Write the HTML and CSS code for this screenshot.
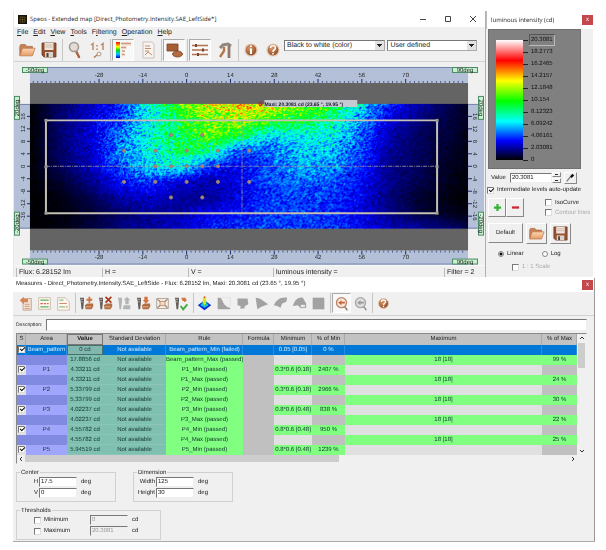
FILE: index.html
```
<!DOCTYPE html>
<html lang="en">
<head>
<meta charset="utf-8">
<title>Speos - Extended map</title>
<link rel="stylesheet" href="styles.css">
</head>
<body>
<svg class="defs" aria-hidden="true">
  <defs>
    <linearGradient id="peach" x1="0" y1="0" x2="0" y2="1"><stop offset="0" stop-color="#fbd6b4"/><stop offset="1" stop-color="#e79a62"/></linearGradient>
    <radialGradient id="ball" cx=".4" cy=".35" r=".7"><stop offset="0" stop-color="#d99a6c"/><stop offset="1" stop-color="#8a4420"/></radialGradient>
    <linearGradient id="rain" x1="0" y1="0" x2="0" y2="1"><stop offset="0" stop-color="#f00"/><stop offset=".3" stop-color="#ff0"/><stop offset=".5" stop-color="#0d0"/><stop offset=".75" stop-color="#0cf"/><stop offset="1" stop-color="#00c"/></linearGradient>
  </defs>
  <symbol id="folder" viewBox="0 0 20 18"><path d="M2 15V5l1-2h5l2 2h6v3" fill="#c98255" stroke="#a8643a" stroke-width=".8"/><path d="M2 15.500 5 7h14l-3 8.500z" fill="url(#peach)" stroke="#b9754a" stroke-width=".8"/></symbol>
  <symbol id="save" viewBox="0 0 18 18"><path d="M2 2h14v14H4l-2-2z" fill="#955130" stroke="#6b3a22" stroke-width=".8"/><path d="M4.500 2h9v7h-9z" fill="#f1e4da"/><path d="M5.500 4h7M5.500 6h7" stroke="#c5aea0" stroke-width=".8"/><path d="M5 11h8v5H5z" fill="#d9d3cf"/><path d="M6.500 12h2v4h-2z" fill="#543"/></symbol>
  <symbol id="lens" viewBox="0 0 18 18"><path d="m10 10 3 6" stroke="#a8643a" stroke-width="2.400" stroke-linecap="round"/><circle cx="8" cy="6" r="4.500" fill="#e4dcd6" stroke="#a39a94" stroke-width="1.600"/></symbol>
  <symbol id="one" viewBox="0 0 18 18"><path d="m3 4 2-1.500V9M13 4l2-1.500V9" fill="none" stroke="#c08a68" stroke-width="1.500"/><path d="M9 4v1.500M9 7.500V9" stroke="#c08a68" stroke-width="1.600"/><circle cx="11" cy="13" r="2" fill="none" stroke="#b09a8c"/><path d="m9 14-3 2.500" stroke="#b9754a" stroke-width="1.500"/></symbol>
  <symbol id="levels" viewBox="0 0 18 18"><path d="M2 1h4v16H2z" fill="url(#rain)"/><path d="M8 1h9v4h-4v3H9v8H7" fill="#f6e7dc"/><path d="M7 2.500h10M7 6.500h5M8 10h3M8 13.500h3" stroke="#c99a7c" stroke-width="1.300"/></symbol>
  <symbol id="sheet" viewBox="0 0 18 18"><path d="M4 1h9l2 2v14H4z" fill="#f8f3ef" stroke="#c0b4ac" stroke-width=".8"/><path d="M6 5h5M6 7.500h6M6 10h4M6 14l3-3 4 3" fill="none" stroke="#c08e72"/></symbol>
  <symbol id="shapes" viewBox="0 0 18 18"><path d="M2 3h11v7H2z" fill="#a65f35" stroke="#7b4122" stroke-width=".8"/><ellipse cx="12.500" cy="13" rx="5" ry="3" fill="#b56b3f" stroke="#7b4122" stroke-width=".8"/></symbol>
  <symbol id="sliders" viewBox="0 0 18 18"><path d="M1 4.500h16M1 9h16M1 13.500h16" stroke="#ad7350" stroke-width="1.300"/><path d="M5 3v3M12 7.500v3M7 12v3" stroke="#7b4122" stroke-width="2"/></symbol>
  <symbol id="tools" viewBox="0 0 18 18"><path d="M4 7 7 4l5-1 3 2" fill="none" stroke="#8f8680" stroke-width="3"/><path d="M8 6v4l-4 6" fill="none" stroke="#b9754a" stroke-width="2.400"/><path d="M13 5v12" stroke="#8f7a6c" stroke-width="2.800"/></symbol>
  <symbol id="info" viewBox="0 0 18 18"><circle cx="9" cy="9" r="6" fill="url(#ball)" stroke="#e5c8b4" stroke-width="1.200"/><path d="M9 4.500V6M9 7.500V13" stroke="#fff" stroke-width="2"/></symbol>
  <symbol id="help" viewBox="0 0 18 18"><circle cx="9" cy="9" r="6" fill="url(#ball)" stroke="#e5c8b4" stroke-width="1.200"/><path d="M6.500 7c0-3 5-3 5 0 0 2-2.500 1.500-2.500 4M9 12v1.500" fill="none" stroke="#fff" stroke-width="1.600"/></symbol>
  <symbol id="export" viewBox="0 0 18 18"><path d="M6 3h10v14H6z" fill="#f3e0d2" stroke="#bb8b6c" stroke-width=".8"/><path d="M2 5 7 1v2.500h5v4H7V10z" fill="#d58556"/><path d="M8 10h6M8 12.500h6M8 15h6" stroke="#c49a7f"/></symbol>
  <symbol id="list" viewBox="0 0 18 18"><path d="M2 2h14v14H2z" fill="#fdf9f4" stroke="#c9b3a2"/><path d="M4 5h10M4 13h10" stroke="#5faf57" stroke-width="1.500"/><path d="M4 9h10" stroke="#d9694f" stroke-width="1.500" stroke-dasharray="3 1"/></symbol>
  <symbol id="list2" viewBox="0 0 18 18"><path d="M2 2h9l5 5v10H2z" fill="#fbf6f0" stroke="#c9b3a2"/><path d="M4 5h5M4 13h7" stroke="#8fbf78" stroke-width="1.400"/><path d="M4 9h9M12 13h2" stroke="#d98a6c" stroke-width="1.400"/></symbol>
  <symbol id="gauge" viewBox="0 0 18 18"><path d="M1 2h5v4L5 16H3L2 6z" fill="#655e5a"/><path d="M2 4h3M2 7h3" stroke="#ddd" stroke-width=".7"/></symbol>
  <symbol id="part" viewBox="0 0 18 18"><path d="m7 11 3-2h7v4l-2 3H8z" fill="#b26d43"/><path d="M8 13h7" stroke="#e8bb9a"/></symbol>
  <symbol id="madd" viewBox="0 0 18 18"><use href="#gauge"/><use href="#part"/><path d="M12.500 1v7M9 4.500h7" stroke="#cf7444" stroke-width="2.200"/></symbol>
  <symbol id="mdel" viewBox="0 0 18 18"><use href="#gauge"/><use href="#part"/><path d="m9 1 7 7M16 1 9 8" stroke="#a9391c" stroke-width="2"/></symbol>
  <symbol id="mup" viewBox="0 0 18 18"><path d="M1 2h5v4L5 16H3L2 6zM8 11h8v5H7zM12 1l4 4h-2v5h-4V5H8z" fill="#b4b4b4"/></symbol>
  <symbol id="mdown" viewBox="0 0 18 18"><use href="#gauge"/><use href="#part"/><path d="m12 9-4-4h2V1h4v4h2z" fill="#d7713e"/></symbol>
  <symbol id="fit" viewBox="0 0 18 18"><path d="M2 3h14v12H2z" fill="#f4eee9" stroke="#a8978b"/><path d="m3 4 12 10M15 4 3 14" stroke="#8f7564" stroke-width="1.400"/><path d="M6 6.500h6v5H6z" fill="#f2d8c6" stroke="#b98b6b"/></symbol>
  <symbol id="mcheck" viewBox="0 0 18 18"><use href="#gauge"/><path d="M9 3h4v4M15 5h-5" fill="none" stroke="#d7713e" stroke-width="2"/><path d="m8 12 3 4 5-6" fill="none" stroke="#48ac45" stroke-width="2.400"/></symbol>
  <symbol id="surface" viewBox="0 0 18 18"><path d="m9 5 8 6-8 6-8-6z" fill="#0828dc"/><path d="m4 11 4-5V1h2v5l4 5-5 3z" fill="#13c8c8"/><path d="M7 8V2l2-2 2 2v6l-2 3z" fill="#dce61c"/><path d="M8 2.500 9 0l1 2.500z" fill="#e33"/></symbol>
  <symbol id="g1" viewBox="0 0 18 18"><path d="M2 2h3c2 0 3 6 6 9 2 2 4 3 6 3v2H2z" fill="#a2a2a2"/><path d="M7 2h10v10" fill="none" stroke="#ddd"/></symbol>
  <symbol id="g2" viewBox="0 0 18 18"><path d="M3 3h12l1 7-4 2-1 3H6l1-3-4-1z" fill="#a2a2a2"/></symbol>
  <symbol id="g3" viewBox="0 0 18 18"><path d="m2 2 5 1 10 7-8 3-5 3z" fill="#a2a2a2"/></symbol>
  <symbol id="g4" viewBox="0 0 18 18"><path d="M1 11C4 5 8 1 17 2l-1 5-5 2-2 5-4-2z" fill="#a2a2a2"/></symbol>
  <symbol id="g5" viewBox="0 0 18 18"><path d="M1 12C3 6 6 1 13 2l4 7v5h-7l-3-3z" fill="#a2a2a2"/><path d="M10 10h6v4h-6z" fill="#e8e8e8" stroke="#999" stroke-width=".8"/></symbol>
  <symbol id="g6" viewBox="0 0 18 18"><path d="M2 2h14v14H2z" fill="#a2a2a2"/></symbol>
  <symbol id="undo" viewBox="0 0 18 18"><circle cx="9" cy="8" r="6" fill="#f7e6da" stroke="#bd8261" stroke-width="1.600"/><path d="m5 8 4-3v2h4v2H9v2z" fill="#c4683a"/><path d="m13 13 3 4" stroke="#8f8680" stroke-width="2"/></symbol>
  <symbol id="redo" viewBox="0 0 18 18"><circle cx="9" cy="8" r="6" fill="#dedede" stroke="#a6a6a6" stroke-width="1.600"/><path d="m5 8 4-3v2h4v2H9v2z" fill="#999"/><path d="m13 13 3 4" stroke="#999" stroke-width="2"/></symbol>
</svg>

<div class="desk">
  <section class="win main">
    <header class="title">
      <svg class="logo" viewBox="0 0 9 9"><path d="M0 0h9v9H0z" fill="#17140c"/><path d="M2 2h5v5H2zM2 4.500h5M4.500 2v5" fill="none" stroke="#6d5a1c" stroke-width=".7"/></svg>
      <h1>Speos - Extended map [Direct_Photometry.Intensity.SAE_LeftSide*]</h1>
      <div class="caption">
        <button aria-label="Minimize"><svg viewBox="0 0 8 8"><path d="M1 4.500h6"/></svg></button>
        <button aria-label="Maximize"><svg viewBox="0 0 8 8"><path d="M1.500 1.500h5v5h-5z"/></svg></button>
        <button aria-label="Close"><svg viewBox="0 0 8 8"><path d="m1 1 6 6M7 1 1 7"/></svg></button>
      </div>
    </header>
    <nav class="menu">
      <a href="#"><u>F</u>ile</a><a href="#"><u>E</u>dit</a><a href="#"><u>V</u>iew</a><a href="#"><u>T</u>ools</a><a href="#">F<u>i</u>ltering</a><a href="#"><u>O</u>peration</a><a href="#"><u>H</u>elp</a>
    </nav>
    <div class="bar">
      <div class="set"><button aria-label="Open"><svg><use href="#folder"/></svg></button><button aria-label="Save"><svg><use href="#save"/></svg></button></div>
      <div class="set"><button aria-label="Zoom"><svg><use href="#lens"/></svg></button><button aria-label="Actual size"><svg><use href="#one"/></svg></button></div>
      <div class="set spaced"><button class="on" aria-label="Levels"><svg><use href="#levels"/></svg></button><button aria-label="Report"><svg><use href="#sheet"/></svg></button></div>
      <div class="set"><button class="on" aria-label="Measures"><svg><use href="#shapes"/></svg></button></div>
      <div class="set spaced"><button class="on" aria-label="Rulers"><svg><use href="#sliders"/></svg></button><button aria-label="Preferences"><svg><use href="#tools"/></svg></button></div>
      <div class="set end"><button aria-label="Information"><svg><use href="#info"/></svg></button><button aria-label="Help"><svg><use href="#help"/></svg></button></div>
      <select class="wide" aria-label="Palette"><option>Black to white (color)</option></select>
      <select aria-label="Scale"><option>User defined</option></select>
    </div>
    <svg class="plot" viewBox="14 64 472 201" role="img" aria-label="Intensity map">
      <path class="ruler" d="M30 67h439v16H30zM30 251h439v14H30zM14 104h16v125H14zM469 104h16v125h-16z"/>
      <path class="edge" d="M30 67.500h439M30 264.500h439M14 104.500h16M14 228.500h16M469 104.500h16M469 228.500h16"/>
      <path d="M30 83h439v168H30z" fill="#646464"/>
      <foreignObject x="30" y="104" width="439" height="125"><canvas id="map" width="439" height="125"></canvas></foreignObject>
      <g id="ticks"></g>
      <path d="M46 166.500h392M242.500 120v93" class="dash"/>
      <path d="M46 120.500h392v93H46z" class="frame"/>
      <g id="spots"></g>
      <path d="M265 100h93v7h-93z" fill="#c6c8d2"/>
      <circle cx="261" cy="104" r="1.600" fill="none" stroke="#c01010"/>
      <text class="peak" x="265" y="106">Maxi: 20.3081 cd (23.65 °, 19.95 °)</text>
      <g id="badges"></g>
    </svg>
    <footer class="status"><span>Flux: 6.28152 lm</span><span>H =</span><span>V =</span><span>luminous intensity =</span><span>Filter = 2</span></footer>
  </section>

  <section class="win palette">
    <header class="title"><h2>luminous intensity (cd)</h2><button class="close" aria-label="Close palette">x</button></header>
    <div class="legend">
      <div class="ramp"></div>
      <ol><li class="sel">20.3081</li><li>18.2773</li><li>16.2465</li><li>14.2157</li><li>12.1848</li><li>10.154</li><li>8.12323</li><li>6.09242</li><li>4.06161</li><li>2.03081</li><li>0</li></ol>
    </div>
    <div class="value">
      <label for="val">Value</label><input id="val" type="text" value="20.3081">
      <div class="spin"><button aria-label="Increase"></button><button aria-label="Decrease"></button></div>
      <button class="raised pick" aria-label="Pick colour"><svg viewBox="0 0 12 12"><path d="m2 10 5-6" stroke="#777" stroke-width="1.500"/><path d="m6 4 3-3 2 2-3 3z" fill="#111"/></svg></button>
    </div>
    <label class="opt"><input type="checkbox" checked>Intermediate levels auto-update</label>
    <div class="pair">
      <button class="raised" aria-label="Add level"><svg viewBox="0 0 10 10"><path d="M5 1v8M1 5h8" stroke="#36b336" stroke-width="2.500"/></svg></button>
      <button class="raised" aria-label="Remove level"><svg viewBox="0 0 10 10"><path d="M1 5h8" stroke="#cc2635" stroke-width="2.500"/></svg></button>
      <div class="stack"><label class="opt"><input type="checkbox">IsoCurve</label><label class="opt off"><input type="checkbox" disabled>Contour lines</label></div>
    </div>
    <div class="files">
      <button class="raised">Default</button>
      <button class="raised" aria-label="Load palette"><svg><use href="#folder"/></svg></button>
      <button class="raised" aria-label="Save palette"><svg><use href="#save"/></svg></button>
    </div>
    <div class="radios"><label class="opt"><input type="radio" name="sc" checked>Linear</label><label class="opt"><input type="radio" name="sc">Log</label></div>
    <label class="opt off scale"><input type="checkbox" disabled>1 : 1 Scale</label>
  </section>

  <section class="win measures">
    <header class="title"><h2>Measures - Direct_Photometry.Intensity.SAE_LeftSide - Flux: 6.28152 lm, Maxi: 20.3081 cd (23.65 °, 19.95 °)</h2><button class="close" aria-label="Close measures">x</button></header>
    <div class="bar small">
      <div class="set"><button aria-label="Export"><svg><use href="#export"/></svg></button><button aria-label="List"><svg><use href="#list"/></svg></button><button aria-label="Template"><svg><use href="#list2"/></svg></button></div>
      <div class="set"><button aria-label="Add"><svg><use href="#madd"/></svg></button><button aria-label="Delete"><svg><use href="#mdel"/></svg></button><button aria-label="Move up"><svg><use href="#mup"/></svg></button><button aria-label="Move down"><svg><use href="#mdown"/></svg></button><button aria-label="Fit"><svg><use href="#fit"/></svg></button><button aria-label="Validate"><svg><use href="#mcheck"/></svg></button></div>
      <div class="set"><button aria-label="Surface"><svg><use href="#surface"/></svg></button><button aria-label="Curve"><svg><use href="#g1"/></svg></button><button aria-label="Ellipse"><svg><use href="#g2"/></svg></button><button aria-label="Polygon"><svg><use href="#g3"/></svg></button><button aria-label="Section"><svg><use href="#g4"/></svg></button><button aria-label="Region"><svg><use href="#g5"/></svg></button><button aria-label="Rectangle"><svg><use href="#g6"/></svg></button></div>
      <div class="set"><button class="on" aria-label="Undo"><svg><use href="#undo"/></svg></button><button aria-label="Redo"><svg><use href="#redo"/></svg></button></div>
      <div class="set end"><button aria-label="Help on measures"><svg><use href="#help"/></svg></button></div>
    </div>
    <div class="desc"><label for="desc">Description:</label><input id="desc" type="text"></div>
    <div class="grid">
      <div class="view">
        <table>
          <colgroup><col class="c-s"><col class="c-area"><col class="c-val"><col class="c-dev"><col class="c-rule"><col class="c-form"><col class="c-min"><col class="c-pmin"><col><col class="c-pmax"></colgroup>
          <thead><tr><th>S</th><th>Area</th><th class="cur">Value</th><th>Standard Deviation</th><th>Rule</th><th>Formula</th><th>Minimum</th><th>% of Min</th><th>Maximum</th><th>% of Max</th></tr></thead>
          <tbody id="rows"></tbody>
        </table>
      </div>
      <div class="vscroll"><svg viewBox="0 0 8 8"><path d="m2 5 2-2 2 2"/></svg><i></i><svg viewBox="0 0 8 8"><path d="m2 3 2 2 2-2"/></svg></div>
      <div class="hscroll"><svg viewBox="0 0 8 8"><path d="M5 2 3 4l2 2"/></svg><i></i><svg viewBox="0 0 8 8"><path d="m3 2 2 2-2 2"/></svg></div>
    </div>
    <div class="groups">
      <fieldset><legend>Center</legend>
        <div class="field"><label for="h">H</label><input id="h" type="text" value="17.5"><span>deg</span></div>
        <div class="field"><label for="v">V</label><input id="v" type="text" value="0"><span>deg</span></div>
      </fieldset>
      <fieldset><legend>Dimension</legend>
        <div class="field"><label for="w">Width</label><input id="w" type="text" value="125"><span>deg</span></div>
        <div class="field"><label for="ht">Height</label><input id="ht" type="text" value="30"><span>deg</span></div>
      </fieldset>
    </div>
    <fieldset class="limits"><legend>Thresholds</legend>
      <div class="field"><label class="opt"><input type="checkbox">Minimum</label><input type="text" value="0" disabled aria-label="Minimum threshold"><span>cd</span></div>
      <div class="field"><label class="opt"><input type="checkbox">Maximum</label><input type="text" value="20.3081" disabled aria-label="Maximum threshold"><span>cd</span></div>
    </fieldset>
  </section>
</div>
<script src="app.js"></script>
</body>
</html>
```
FILE: styles.css
```
* { box-sizing: border-box; }
body { margin: 0; padding: 11px 11px 8px 13px; background: #fff; color: #222; font: 7px/9px "Liberation Sans", Arial, sans-serif; text-rendering: geometricPrecision; }
.defs { position: absolute; width: 0; height: 0; }
button, input, select { font: inherit; color: inherit; text-rendering: inherit; margin: 0; padding: 0; border: 0; background: none; border-radius: 0; }
svg { display: block; }
h1, h2 { margin: 0; font: 6px/9px "Open Sans", "Noto Sans", sans-serif; white-space: nowrap; }

.desk { display: grid; grid-template-columns: 1fr 109px; }
.win { background: #f0f0f0; min-width: 0; }
.title { display: flex; align-items: center; background: #fff; height: 16px; }
.main { border-right: 1px solid #b0b0b0; border-left: 1px solid #e8e8e8; }
.main .title { padding: 0 8px 0 4px; gap: 3px; }
.logo { width: 9px; height: 9px; }
.caption { display: flex; gap: 17px; margin-left: auto; }
.caption svg { width: 8px; height: 8px; fill: none; stroke: #444; stroke-width: 1; }
.menu { display: flex; gap: 5px; padding: 0 3px; height: 11px; line-height: 11px; }
.menu a { color: #222; text-decoration: none; }

.bar { display: flex; align-items: center; height: 24px; padding: 0 8px 0 2px; border-bottom: 1px solid #d2d2d2; }
.set { display: flex; border-right: 1px solid #c6c6c6; padding-right: 2px; margin-right: 1px; }
.set.spaced { gap: 3px; }
.set.end { border: 0; padding: 0; margin: 0; }
.bar button { width: 22px; height: 22px; display: grid; place-items: center; border: 1px solid transparent; }
.bar button svg { width: 18px; height: 18px; }
.bar button.on { border-color: #aaa #fff #fff #aaa; background: #f8f8f8; }
.bar select { appearance: none; height: 11px; width: 91px; margin: 0 0 8px 2px; padding: 0 12px 0 2px; line-height: 9px; border: 1px solid; border-color: #777 #aaa #aaa #777;
  background: linear-gradient(#222, #222) right 2px top 3px / 5px 1px no-repeat, linear-gradient(#222, #222) right 3px top 4px / 3px 1px no-repeat, linear-gradient(#222, #222) right 4px top 5px / 1px 1px no-repeat, linear-gradient(#e2e2e2, #e2e2e2) right / 9px 100% no-repeat, #fff; }
.bar select.wide { width: 103px; margin-left: 0; }

.plot { width: 100%; height: auto; margin-top: 2px; }
.plot text { font: 6px "Liberation Sans", sans-serif; fill: #222; text-anchor: middle; }
.plot .ruler { fill: #b4c0d8; }
.plot .edge { stroke: #7285ad; fill: none; }
.plot .tick { stroke: #2c407c; stroke-width: .8; }
.plot .major { stroke: #142a6c; stroke-width: 1; }
.plot .dash { stroke: #a59c94; stroke-width: .8; stroke-dasharray: 4 1 1 1; fill: none; }
.plot .frame { stroke: #c4c0b4; stroke-width: 2; fill: none; }
.plot .spot { fill: #b08a72; stroke: #8c7c78; stroke-width: 1; }
.plot .badge { fill: #c6f3ce; stroke: #4d8a66; }
.plot text.peak { font-weight: bold; font-size: 5px; text-anchor: start; fill: #181828; }
#map { display: block; width: 100%; }

.status { display: grid; grid-template-columns: 86px 86px 85px 1fr 41px; height: 12px; padding: 2px 0 0 2px; border-top: 1px solid #fafafa; }
.status span { border-left: 1px solid #bbb; padding-left: 2px; line-height: 9px; white-space: nowrap; }

.palette { font-size: 6px; line-height: 8px; padding-right: 2px; background: linear-gradient(#f0f0f0, #f0f0f0) left / 107px 100% no-repeat, #fff; }
.palette .title { height: 18px; padding-left: 4px; border-left: 1px solid #bbb; }
.close { width: 11px; height: 10px; margin-left: auto; background: #c4474c; color: #fff; font-size: 6px; line-height: 8px; }
.legend { display: flex; background: #808080; height: 140px; margin: 0 12px 3px 2px; padding: 10px 0 10px 7px; border: 1px solid #707070; }
.ramp { width: 27px; height: 120px; background: linear-gradient(#fff, #f00 17%, #ff0 34%, #0f0 51%, #0ff 68%, #00f 84%, #000); }
.legend ol { list-style: none; margin: -6px 0 0; padding: 0; color: #111; }
.legend li { height: 12px; line-height: 12px; display: flex; align-items: center; gap: 3px; padding-right: 2px; }
.legend li::before { content: ""; width: 5px; height: 1px; background: #222; }
.legend .sel { background: linear-gradient(#555, #555) 6px 0 / 100% 1px no-repeat, linear-gradient(#bbb, #bbb) 6px 100% / 100% 1px no-repeat, linear-gradient(#555, #555) 6px 0 / 1px 100% no-repeat, linear-gradient(#bbb, #bbb) 100% 0 / 1px 100% no-repeat; }
input[type=text] { background: #fff; border: 1px solid; border-color: #777 #eee #eee #777; min-width: 0; padding-left: 1px; }
.value { display: flex; align-items: center; padding-left: 5px; height: 11px; }
.value input { width: 42px; height: 10px; margin-left: 4px; }
.spin { display: grid; width: 9px; height: 11px; gap: 1px; }
.spin button { border: 1px solid; border-color: #fff #888 #888 #fff; background: linear-gradient(#333, #333) center / 3px 1px no-repeat; }
.raised { border: 1px solid; border-color: #fff #888 #888 #fff; display: grid; place-items: center; }
.pick { width: 13px; height: 12px; margin-left: 3px; }
.pick svg { width: 10px; height: 10px; }
.opt { display: flex; align-items: center; gap: 3px; white-space: nowrap; }
input[type=checkbox] { appearance: none; width: 7px; height: 7px; flex: none; background: #fff; border: 1px solid; border-color: #777 #ddd #ddd #777; position: relative; }
input[type=checkbox]:checked::after { content: ""; position: absolute; left: 1px; top: 0; width: 4px; height: 2px; border: solid #111; border-width: 0 0 1px 1px; transform: rotate(-45deg); }
input[type=radio] { appearance: none; width: 6px; height: 6px; border-radius: 50%; border: 1px solid #888; background: #fff; }
input[type=radio]:checked { background: radial-gradient(#111 1px, #fff 2px); }
.off { color: #aaa; }
.palette > .opt { padding-left: 1px; margin-top: 3px; }
.pair { display: flex; margin: 4px 0 0 2px; align-items: center; }
.pair .raised { width: 18px; height: 19px; }
.pair svg { width: 9px; height: 9px; }
.stack { display: grid; gap: 2px; margin-left: 21px; }
.files { display: flex; gap: 3px; margin: 6px 0 0 2px; }
.files .raised { width: 21px; height: 21px; }
.files .raised:first-child { width: 35px; height: 20px; }
.files svg { width: 17px; height: 17px; }
.radios { display: flex; gap: 18px; margin: 6px 0 0 12px; }
.palette > .scale { margin: 5px 0 0 25px; }

.measures { grid-column: 1 / -1; margin-top: 1px; font-size: 6px; line-height: 8px; border-right: 1px solid #999; border-bottom: 1px solid #aaa; padding-bottom: 1px; }
.measures .title { height: 14px; padding: 0 1px 0 3px; }
.measures h2 { font-family: "Liberation Sans", Arial, sans-serif; }
.measures .small { height: 24px; padding-left: 3px; }
.small button { width: 19px; height: 20px; }
.small button svg { width: 15px; height: 15px; }
.desc { display: flex; align-items: center; gap: 2px; height: 12px; margin: 3px 7px 0 3px; }
.desc label { width: 28px; flex: none; font-size: 5px; }
.desc input { flex: 1; height: 12px; }
.grid { display: grid; grid-template-columns: 1fr 9px; grid-template-rows: 121px 8px; margin: 2px 7px 0 3px; border: 1px solid; border-color: #888 #f0f0f0 #f0f0f0 #888; }
.view { overflow: hidden; }
table { width: 100%; table-layout: fixed; border-collapse: collapse; }
.c-s { width: 9px; } .c-area { width: 41px; } .c-val { width: 36px; } .c-dev { width: 63px; } .c-rule { width: 77px; }
.c-form { width: 31px; } .c-min { width: 38px; } .c-pmin { width: 33px; } .c-pmax { width: 35px; }
th, td { padding: 0; height: 10px; line-height: 10px; text-align: center; font-weight: normal; white-space: nowrap; overflow: hidden; }
th { height: 11px; background: #c2c2c2; box-shadow: inset -1px 0 #aaa; }
th.cur { font-weight: bold; box-shadow: inset 0 0 0 1px #777; }
td input[type=checkbox] { display: block; margin-left: 1px; }
td { color: #123430; }
.area { background: #a0a6fc; } .area2 { background: #7f8ae0; }
.teal { background: #80c0b0; box-shadow: inset 0 -1px #89c6b7; }
.green { background: #80ff80; } .grey { background: #c0c0c0; } .pale { background: #e0e0e0; }
.first td { background: #0078d7; color: #d4ecff; box-shadow: inset -1px 0 #2a8ce0; }
.first td.focus { background: #80b8b0; color: #1f3a36; box-shadow: inset 0 0 0 1px #4b706c; }
.vscroll, .hscroll { display: flex; align-items: center; }
.vscroll { flex-direction: column; }
.vscroll svg, .hscroll svg { width: 8px; height: 8px; fill: none; stroke: #333; }
.vscroll i { width: 7px; height: 25px; background: #cdcdcd; margin: 1px 0 auto; }
.hscroll i { width: 56%; height: 7px; background: #cdcdcd; margin-right: auto; }
fieldset { margin: 0; border: 1px solid #d0d0d0; padding: 0 0 2px; min-width: 0; width: 100px; }
legend { padding: 0 1px; margin-left: 3px; line-height: 8px; height: 8px; }
.groups { display: flex; gap: 17px; margin: 5px 0 0 3px; }
.field { display: flex; align-items: center; gap: 1px; height: 11px; }
.field > label:not(.opt) { width: 21px; text-align: right; }
.field > input { width: 38px; height: 10px; }
.field > span { margin-left: 3px; }
.limits { width: 145px; margin: 5px 0 0 3px; }
.limits .opt { width: 55px; margin-left: 17px; }
.limits input:disabled { background: #f0f0f0; color: #999; }
```
FILE: app.js
```
const NS = 'http://www.w3.org/2000/svg';
function add(parent, tag, attrs, text) {
  const el = document.createElementNS(NS, tag);
  for (const k in attrs) el.setAttribute(k, attrs[k]);
  if (text !== undefined) el.textContent = text;
  document.getElementById(parent).appendChild(el);
}

// Rulers: horizontal scale -50..90 deg, vertical scale -20..20 deg
const X = d => 187 + d * 3.136, Y = d => 166.5 - d * 3.125;
for (let i = -35; i < 64; i++) {
  const x = X(i * 1.4), major = i % 10 === 0 && Math.abs(i) < 60 && i >= -20;
  const c = major ? 'major' : 'tick', h = major ? 4 : 2;
  add('ticks', 'path', { class: c, d: `M${x} 83v${-h}M${x} 251v${h}` });
  if (major) {
    add('ticks', 'text', { x, y: 77 }, Math.round(i * 1.4));
    add('ticks', 'text', { x, y: 259 }, Math.round(i * 1.4));
  }
}
for (let d = -16; d <= 16; d += 4) {
  const y = Y(d);
  add('ticks', 'path', { class: 'major', d: `M27 ${y}h3M469 ${y}h4` });
  add('ticks', 'text', { transform: `translate(25 ${y}) rotate(-90)` }, d);
  add('ticks', 'text', { transform: `translate(474 ${y}) rotate(90)` }, d);
}
[[22, 68, '-50deg'], [453, 68, '90deg'], [22, 260, '-50deg'], [453, 260, '90deg']].forEach(([x, y, t]) => {
  add('badges', 'rect', { class: 'badge', x: x + .5, y: y - .5, width: 25, height: 5 });
  add('badges', 'text', { x: x + 13, y: y + 4 }, t);
});
[[14, 96, '20deg', -90], [14, 212, '-20deg', -90], [479, 96, '20deg', 90], [479, 212, '-20deg', 90]].forEach(([x, y, t, r]) => {
  add('badges', 'rect', { class: 'badge', x: x + .5, y: y + .5, width: 5, height: 23 });
  add('badges', 'text', { transform: `translate(${r < 0 ? x + 5 : x + 1} ${y + 12}) rotate(${r})` }, t);
});
[[-5, 10], [5, 10], [-20, 5], [-10, 5], [0, 5], [10, 5], [20, 5], [-10, 0], [-5, 0], [0, 0], [5, 0], [10, 0],
 [-20, -5], [-10, -5], [0, -5], [10, -5], [20, -5], [-5, -10], [5, -10]].forEach(([h, v]) =>
  add('spots', 'circle', { class: 'spot', cx: X(h), cy: Y(v), r: 1.6 }));
[[46, 120.5], [438, 120.5], [46, 213.5], [438, 213.5], [46, 167], [438, 167]].forEach(([x, y]) =>
  add('spots', 'rect', { x: x - 1.5, y: y - 1.5, width: 3, height: 3, fill: '#999' }));

// Intensity samples, interpolated and made grainy
const gx = [30, 60, 90, 120, 150, 180, 210, 240, 270, 300, 330, 360, 390, 420, 450, 470];
const gy = [104, 120, 135, 150, 167, 182, 198, 213, 230];
const g = [
  [0, .07, .13, .18, .36, .54, .64, .7, .68, .58, .5, .32, .19, .11, .05, .02],
  [0, .07, .14, .22, .36, .47, .58, .6, .52, .47, .41, .27, .14, .08, .04, .02],
  [0, .07, .14, .25, .36, .45, .56, .48, .32, .35, .34, .25, .12, .06, .04, .01],
  [0, .07, .13, .25, .35, .45, .42, .22, .24, .31, .31, .22, .1, .06, .03, .01],
  [0, .06, .12, .22, .31, .34, .18, .16, .22, .28, .27, .19, .09, .06, .02, .01],
  [0, .03, .09, .17, .2, .14, .11, .15, .22, .24, .22, .17, .09, .05, .02, .01],
  [0, .01, .05, .11, .13, .1, .1, .16, .2, .21, .2, .16, .08, .03, .01, 0],
  [0, .01, .03, .07, .1, .1, .15, .18, .2, .2, .19, .15, .09, .04, .02, .01],
  [0, .01, .04, .08, .1, .14, .18, .2, .21, .21, .2, .17, .13, .11, .08, .05]];
const stops = [[0, 0, 0, 0], [.17, 0, 0, 255], [.34, 0, 255, 255], [.5, 0, 255, 0], [.67, 255, 255, 0], [.83, 255, 0, 0], [1, 255, 255, 255]];
function color(v) {
  let i = 0;
  while (i < stops.length - 2 && v > stops[i + 1][0]) i++;
  const a = stops[i], b = stops[i + 1], t = (v - a[0]) / (b[0] - a[0]);
  return [1, 2, 3].map(k => a[k] + (b[k] - a[k]) * t);
}
let seed = 7;
const rnd = () => (seed = (seed * 16807) % 2147483647) / 2147483647;
function at(list, v) {
  let i = 0;
  while (i < list.length - 2 && v > list[i + 1]) i++;
  return [i, (v - list[i]) / (list[i + 1] - list[i])];
}
const cv = document.getElementById('map'), ctx = cv.getContext('2d'), img = ctx.createImageData(439, 125);
const noise = Array.from({ length: 126 * 440 }, () => rnd() + rnd() + rnd() - 1.5);
for (let y = 0; y < 125; y++) for (let x = 0; x < 439; x++) {
  const [i, s] = at(gx, x + 30), [j, t] = at(gy, y + 104);
  const base = (g[j][i] * (1 - s) + g[j][i + 1] * s) * (1 - t) + (g[j + 1][i] * (1 - s) + g[j + 1][i + 1] * s) * t;
  const n = noise[y * 440 + x] * .6 + (noise[(y + 1) * 440 + x] + noise[y * 440 + x + 1]) * .4;
  const c = color(Math.max(0, base + n * (.012 + .2 * Math.sqrt(base) * Math.min(1, base * 4))));
  img.data.set([c[0], c[1], c[2], 255], (y * 439 + x) * 4);
}
ctx.putImageData(img, 0, 0);

// Measure rows: a minimum rule and a maximum rule for each area
const areas = [
  ['Beam_pattern', '0 cd', '17.8856 cd', '0.05 [0.05]', '0 %', '99 %'],
  ['P1', '4.33211 cd', '4.33211 cd', '0.3*0.6 [0.18]', '2407 %', '24 %'],
  ['P2', '5.33799 cd', '5.33799 cd', '0.3*0.6 [0.18]', '2966 %', '30 %'],
  ['P3', '4.02237 cd', '4.02237 cd', '0.8*0.6 [0.48]', '838 %', '22 %'],
  ['P4', '4.55782 cd', '4.55782 cd', '0.8*0.6 [0.48]', '950 %', '25 %'],
  ['P5', '5.94519 cd', null, '0.8*0.6 [0.48]', '1239 %', '']];
const td = (c, t = '') => `<td class="${c}">${t}</td>`;
document.getElementById('rows').innerHTML = areas.map(([n, v1, v2, min, pmin, pmax], k) => {
  const box = `<input type="checkbox" checked aria-label="${n}">`;
  let s = `<tr class="${k ? '' : 'first'}">` + td('pale', box) + td('area', n) + td(k ? 'teal' : 'focus', v1) + td('teal', 'Not available') +
    td('green', `${n}_Min (${k ? 'passed' : 'failed'})`) + td('grey') + td('green', min) + td('green', pmin) + td('pale') + td('grey') + '</tr>';
  if (v2) s += '<tr>' + td('area2') + td('area2') + td('teal', v2) + td('teal', 'Not available') +
    td('green', `${n}_Max (passed)`) + td('grey') + td('pale') + td('grey') + td('green', '18 [18]') + td('green', pmax) + '</tr>';
  return s;
}).join('');
```
